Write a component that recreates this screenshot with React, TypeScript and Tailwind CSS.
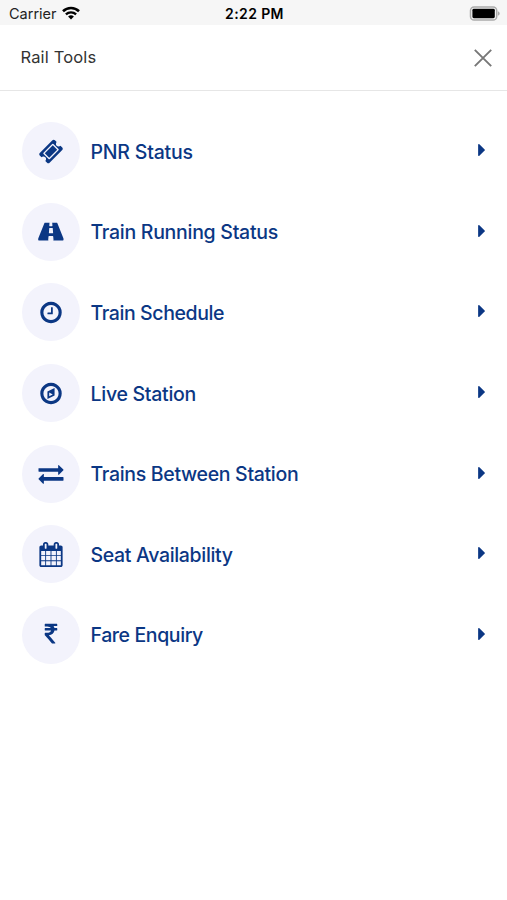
import React from "react";

type ToolItem = {
  label: string;
  icon: string;
  viewBox?: string;
  width?: string;
  textClass: string;
};

const tools: ToolItem[] = [
  {
    label: "PNR Status",
    textClass: "tracking-[-0.2px]",
    icon: "M1024 452l316 316-572 572-316-316zm-211 979l618-618q19-19 19-45t-19-45l-362-362q-18-18-45-18t-45 18l-618 618q-19 19-19 45t19 45l362 362q18 18 45 18t45-18zm889-637l-907 908q-37 37-90.5 37t-90.5-37l-126-125q56-56 56-136t-56-136-136-56-136 56l-125-126q-37-37-37-90.5t37-90.5l907-906q37-37 90.5-37t90.5 37l125 125q-56 56-56 136t56 136 136 56 136-56l126 125q37 37 37 90.5t-37 90.5z",
  },
  {
    label: "Train Running Status",
    textClass: "tracking-[-0.28px]",
    viewBox: "0 0 1920 1792",
    width: "w-[28px]",
    icon: "M1111 1000v-4l-24-320q-1-13-11-22.5t-23-9.5h-186q-13 0-23 9.5t-11 22.5l-24 320v4q-1 12 8 20t21 8h244q12 0 21-8t8-20zm749 467q0 73-46 73h-704q13 0 22-9.5t8-22.5l-20-256q-1-13-11-22.5t-23-9.5h-272q-13 0-23 9.5t-11 22.5l-20 256q-1 13 8 22.5t22 9.5h-704q-46 0-46-73 0-54 26-116l417-1044q8-19 26-33t38-14h339q-13 0-23 9.5t-11 22.5l-15 192q-1 14 8 23t22 9h166q13 0 22-9t8-23l-15-192q-1-13-11-22.5t-23-9.5h339q20 0 38 14t26 33l417 1044q26 62 26 116z",
  },
  {
    label: "Train Schedule",
    textClass: "tracking-[-0.4px]",
    icon: "M1024 544v448q0 14-9 23t-23 9h-320q-14 0-23-9t-9-23v-64q0-14 9-23t23-9h224v-352q0-14 9-23t23-9h64q14 0 23 9t9 23zm416 352q0-148-73-273t-198-198-273-73-273 73-198 198-73 273 73 273 198 198 273 73 273-73 198-198 73-273zm224 0q0 209-103 385.5t-279.5 279.5-385.5 103-385.5-103-279.5-279.5-103-385.5 103-385.5 279.5-279.5 385.5-103 385.5 103 279.5 279.5 103 385.5z",
  },
  {
    label: "Live Station",
    textClass: "tracking-[-0.28px]",
    icon: "M768 1088l256-128-256-128v256zm384-591v542l-512 256v-542zm288 399q0-148-73-273t-198-198-273-73-273 73-198 198-73 273 73 273 198 198 273 73 273-73 198-198 73-273zm224 0q0 209-103 385.5t-279.5 279.5-385.5 103-385.5-103-279.5-279.5-103-385.5 103-385.5 279.5-279.5 385.5-103 385.5 103 279.5 279.5 103 385.5z",
  },
  {
    label: "Trains Between Station",
    textClass: "tracking-[-0.32px]",
    icon: "M1792 1184v192q0 13-9.5 22.5t-22.5 9.5h-1376v192q0 13-9.5 22.5t-22.5 9.5q-12 0-24-10l-319-320q-9-9-9-22 0-14 9-23l320-320q9-9 23-9 13 0 22.5 9.5t9.5 22.5v192h1376q13 0 22.5 9.5t9.5 22.5zm0-544q0 14-9 23l-320 320q-9 9-23 9-13 0-22.5-9.5t-9.5-22.5v-192h-1376q-13 0-22.5-9.5t-9.5-22.5v-192q0-13 9.5-22.5t22.5-9.5h1376v-192q0-14 9-23t23-9q12 0 24 10l319 319q9 9 9 23z",
  },
  {
    label: "Seat Availability",
    textClass: "tracking-[-0.33px]",
    icon: "M192 1664h288v-288h-288v288zm352 0h320v-288h-320v288zm-352-352h288v-320h-288v320zm352 0h320v-320h-320v320zm-352-384h288v-288h-288v288zm736 736h320v-288h-320v288zm-384-736h320v-288h-320v288zm768 736h288v-288h-288v288zm-384-352h320v-320h-320v320zm-352-864v-288q0-13-9.5-22.5t-22.5-9.5h-64q-13 0-22.5 9.5t-9.5 22.5v288q0 13 9.5 22.5t22.5 9.5h64q13 0 22.5-9.5t9.5-22.5zm736 864h288v-320h-288v320zm-384-384h320v-288h-320v288zm384 0h288v-288h-288v288zm32-480v-288q0-13-9.5-22.5t-22.5-9.5h-64q-13 0-22.5 9.5t-9.5 22.5v288q0 13 9.5 22.5t22.5 9.5h64q13 0 22.5-9.5t9.5-22.5zm384-64v1280q0 52-38 90t-90 38h-1408q-52 0-90-38t-38-90v-1280q0-52 38-90t90-38h128v-96q0-66 47-113t113-47h64q66 0 113 47t47 113v96h384v-96q0-66 47-113t113-47h64q66 0 113 47t47 113v96h128q52 0 90 38t38 90z",
  },
  {
    label: "Fare Enquiry",
    textClass: "tracking-[-0.4px]",
    icon: "M1345 470v102q0 14-9 23t-23 9h-168q-23 144-129 234t-276 110q167 178 459 536 14 16 4 34-8 18-29 18h-195q-16 0-25-12-306-367-498-571-9-9-9-22v-127q0-13 9.5-22.5t22.5-9.5h112q132 0 212.5-43t102.5-125h-427q-14 0-23-9t-9-23v-102q0-14 9-23t23-9h413q-57-113-268-113h-145q-13 0-22.5-9.5t-9.5-22.5v-133q0-14 9-23t23-9h832q14 0 23 9t9 23v102q0 14-9 23t-23 9h-233q47 61 64 144h171q14 0 23 9t9 23z",
  },
];

function StatusBar() {
  return (
    <div className="grid h-[25px] grid-cols-3 items-center bg-[#f6f6f6] pt-[2px] pr-[7px] pl-[9px] text-black">
      <div className="flex items-center gap-[5px]">
        <span className="pt-px text-[14.5px] leading-none text-[#222]">
          Carrier
        </span>
        <svg viewBox="0 0 18 14" className="mb-px h-[14px] w-[18px]" fill="none">
          <path d="M1 5.2a11.5 11.5 0 0 1 16 0" stroke="#000" strokeWidth="2.6" />
          <path d="M3.9 8.4a7.3 7.3 0 0 1 10.2 0" stroke="#000" strokeWidth="2.3" />
          <path d="M9 13.6l-2.9-3a4.1 4.1 0 0 1 5.8 0z" fill="#000" />
        </svg>
      </div>
      <span className="text-center text-[14px] leading-none font-semibold tracking-[0.4px]">
        2:22 PM
      </span>
      <svg viewBox="0 0 31 15" className="h-[15px] w-[31px] justify-self-end">
        <rect x="1.5" y="0.9" width="26.2" height="13.2" rx="3.6" fill="#f6f6f6" stroke="#aaa" strokeWidth="1.5" />
        <rect x="3.4" y="2.8" width="22.4" height="9.4" rx="1.4" fill="#000" />
        <path d="M28.9 5.2c2.4 1 2.4 3.6 0 4.6z" fill="#aaa" />
      </svg>
    </div>
  );
}

function ToolRow({ item }: { item: ToolItem }) {
  return (
    <li className="flex h-[80.6px] items-center">
      <div className="flex size-[58px] items-center justify-center rounded-full bg-[#f3f3fc]">
        <svg
          viewBox={item.viewBox || "0 0 1792 1792"}
          className={`h-[25px] ${item.width || "w-[26px]"}`}
          fill="currentColor"
        >
          <path d={item.icon} />
        </svg>
      </div>
      <span
        className={`ml-[10.5px] flex-1 pt-px text-[19.5px] leading-6 font-medium ${item.textClass}`}
      >
        {item.label}
      </span>
      <svg
        viewBox="576 384 576 1024"
        className="mb-[2px] h-[12px] w-[7px]"
        fill="currentColor"
      >
        <path d="M1152 896q0 26-19 45l-448 448q-19 19-45 19t-45-19-19-45v-896q0-26 19-45t45-19 45 19l448 448q19 19 19 45z" />
      </svg>
    </li>
  );
}

function App() {
  return (
    <div className="h-[900px] w-[507px] overflow-hidden bg-white font-['Inter','Noto_Sans',sans-serif]">
      <StatusBar />
      <header className="flex h-[66px] items-center justify-between border-b border-[#e6e6e6] pr-[15px] pl-[20.5px]">
        <h1 className="text-[16.5px] leading-none tracking-[0.15px] text-[#333]">
          Rail Tools
        </h1>
        <button type="button" aria-label="Close">
          <svg viewBox="0 0 18 18" className="size-[18px]" fill="none">
            <path d="M0.8 0.8l16.4 16.4M17.2 0.8l-16.4 16.4" stroke="#777" strokeWidth="1.9" />
          </svg>
        </button>
      </header>
      <ul className="pt-[20px] pr-[22px] pl-[22px] text-[#0b3784]">
        {tools.map((item) => (
          <ToolRow key={item.label} item={item} />
        ))}
      </ul>
    </div>
  );
}

export default App;
